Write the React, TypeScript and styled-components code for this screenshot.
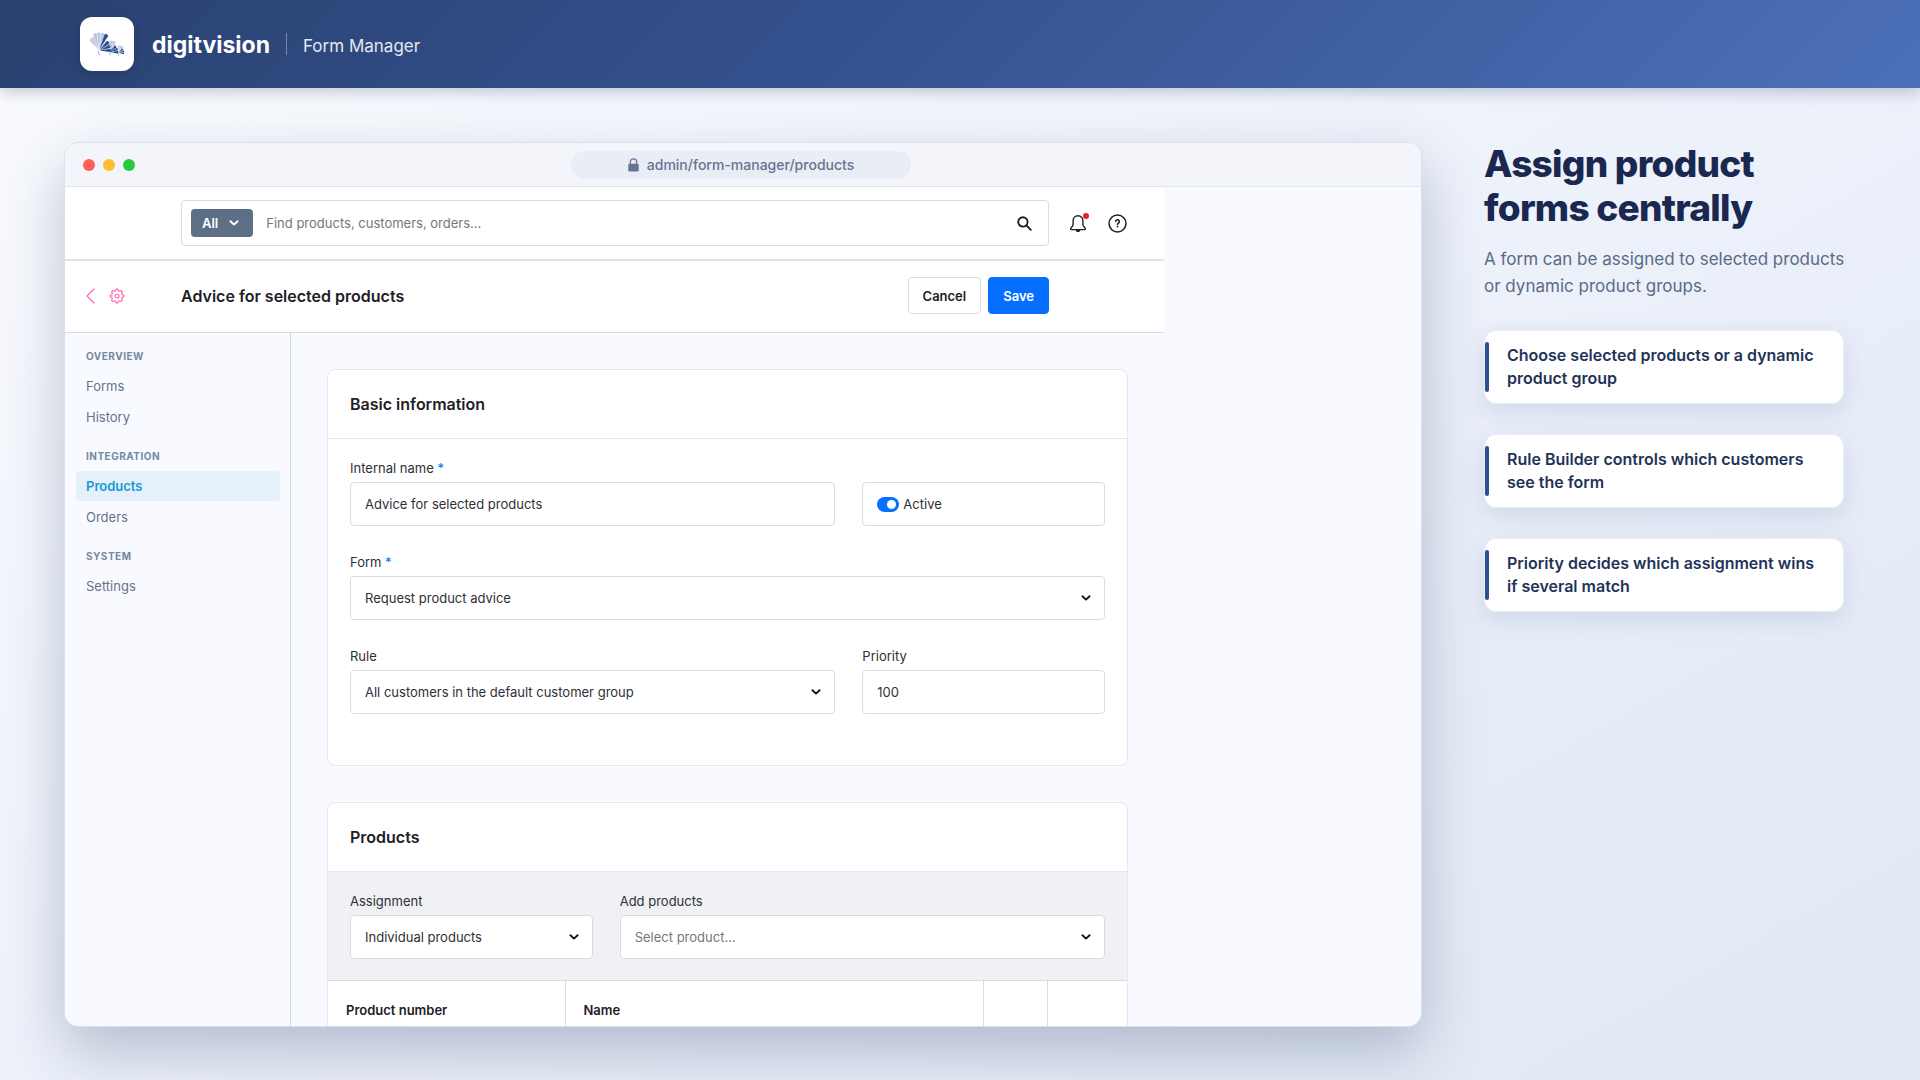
import React, { useId, useState } from 'react';
import styled, { createGlobalStyle, css } from 'styled-components';

const ink = '#1f2026';
const line = '#d9dbe0';
const brand = '#2f4f94';

const GlobalStyle = createGlobalStyle`
  *, *::before, *::after { box-sizing: border-box; }
  body { margin: 0; }
  body, button, input, select { font-family: Inter, 'Liberation Sans', sans-serif; }
  h1, h2, h3, p, ul { margin: 0; padding: 0; }
  ul { list-style: none; }
  button, select { cursor: pointer; }
  svg { display: block; flex: none; }
`;

const Page = styled.div`
  height: 100vh;
  display: flex;
  flex-direction: column;
  overflow: hidden;
  background: linear-gradient(150deg, #fafbfe 0%, #eff3fb 42%, #e7edf8 70%, #e1e8f4 100%);
`;

const Header = styled.header`
  flex: none;
  height: 88px;
  padding: 0 80px;
  display: flex;
  align-items: center;
  background: linear-gradient(135deg, #2a4170 0%, #34528f 45%, #4c70b8 100%);
  box-shadow: 0 4px 14px rgba(30, 50, 90, 0.25);
`;

const LogoTile = styled.a`
  width: 54px;
  height: 54px;
  display: grid;
  place-items: center;
  border-radius: 12px;
  background: #fff;
  box-shadow: 0 3px 8px rgba(15, 30, 60, 0.25);
`;

const BrandName = styled.span`
  margin-left: 18px;
  padding-top: 2px;
  font-size: 23px;
  font-weight: 700;
  color: #fff;
`;

const Divider = styled.span`
  width: 1px;
  height: 22px;
  margin: 0 16px;
  background: rgba(255, 255, 255, 0.35);
`;

const ProductName = styled.span`
  padding-top: 4px;
  font-size: 17px;
  line-height: 22px;
  color: #e3e8f3;
`;

const Main = styled.main`
  flex: 1;
  min-height: 0;
  display: grid;
  grid-template-columns: minmax(0, 1fr) 360px;
  gap: 62px;
  padding: 54px 76px 53px 64px;
`;

const BrowserWindow = styled.section`
  min-height: 0;
  display: flex;
  flex-direction: column;
  overflow: hidden;
  border: 1px solid #d8e1f0;
  border-radius: 14px;
  background: #f9faff;
  box-shadow: 0 24px 60px rgba(40, 62, 100, 0.29);
`;

const TitleBar = styled.div`
  flex: none;
  height: 44px;
  padding: 0 22px 0 18px;
  display: grid;
  grid-template-columns: 1fr 340px 1fr;
  align-items: center;
  background: #f3f5fa;
  border-bottom: 1px solid #dfe5f3;
`;

const Lights = styled.div`
  display: flex;
  gap: 8px;
`;

const Light = styled.span<{ $color: string }>`
  width: 12px;
  height: 12px;
  border-radius: 50%;
  background: ${p => p.$color};
`;

const AddressPill = styled.div`
  height: 28px;
  display: flex;
  align-items: center;
  justify-content: center;
  gap: 8px;
  border-radius: 14px;
  background: #e8edf6;
  color: #65758f;
  font-size: 14px;
  font-weight: 500;
`;

const AdminApp = styled.div`
  flex: 1;
  min-height: 0;
  max-width: 1099px;
  display: flex;
  flex-direction: column;
`;

const Bar = styled.div`
  flex: none;
  display: grid;
  grid-template-columns: 116px minmax(0, 1fr) 115px;
  align-items: center;
  background: #fff;
`;

const TopBar = styled(Bar)`
  height: 74px;
  border-bottom: 2px solid #e2e3e6;
`;

const TitleRow = styled(Bar)`
  height: 72px;
  padding-bottom: 2px;
  border-bottom: 1px solid ${line};
`;

const SearchBox = styled.form`
  grid-column: 2;
  height: 46px;
  padding: 0 16px 0 9px;
  display: flex;
  align-items: center;
  border: 1px solid ${line};
  border-radius: 4px;
`;

const ScopeButton = styled.button`
  height: 28px;
  padding: 0 14px 0 11px;
  display: flex;
  align-items: center;
  gap: 11px;
  border: 0;
  border-radius: 4px;
  background: #5c6f86;
  color: #fff;
  font-size: 13px;
  font-weight: 600;
`;

const SearchInput = styled.input`
  flex: 1;
  min-width: 0;
  height: 28px;
  margin: 0 13px;
  padding: 0;
  border: 0;
  outline: 0;
  font-size: 13px;
  color: ${ink};
  &::placeholder { color: #75777d; opacity: 1; }
`;

const IconButton = styled.button`
  padding: 0;
  border: 0;
  background: none;
  color: ${ink};
`;

const TopActions = styled.div`
  padding-left: 20px;
  display: flex;
  align-items: center;
  gap: 21px;
`;

const BellButton = styled(IconButton)`
  position: relative;
  &::after {
    content: '';
    position: absolute;
    top: -1px;
    right: -2px;
    width: 6px;
    height: 6px;
    border-radius: 50%;
    background: #e3262c;
  }
`;

const NavIcons = styled.div`
  padding-left: 21px;
  display: flex;
  align-items: center;
  gap: 14px;
  & button { color: #ff68b4; }
`;

const TitleArea = styled.div`
  display: flex;
  align-items: center;
  gap: 7px;
`;

const PageTitle = styled.h2`
  flex: 1;
  font-size: 16px;
  line-height: 24px;
  font-weight: 600;
  color: ${ink};
`;

const ActionButton = styled.button<{ $primary?: boolean }>`
  height: 37px;
  padding: 0 14px;
  border: 1px solid ${p => (p.$primary ? '#066fff' : line)};
  border-radius: 4px;
  background: ${p => (p.$primary ? '#066fff' : '#fff')};
  color: ${p => (p.$primary ? '#fff' : ink)};
  font-size: 13px;
  font-weight: 600;
`;

const Body = styled.div`
  flex: 1;
  min-height: 0;
  display: grid;
  grid-template-columns: 226px minmax(0, 1fr);
`;

const Sidebar = styled.nav`
  padding: 13px 10px 0 11px;
  display: flex;
  flex-direction: column;
  gap: 14px;
  border-right: 1px solid #d3d7de;
`;

const NavHeading = styled.h3`
  padding: 0 10px;
  margin-bottom: 5px;
  font-size: 10px;
  line-height: 20px;
  font-weight: 700;
  letter-spacing: 0.05em;
  text-transform: uppercase;
  color: #74889f;
`;

const NavList = styled.ul`
  display: grid;
  gap: 1px;
`;

const NavLink = styled.a<{ $active?: boolean }>`
  display: block;
  padding: 0 10px;
  font-size: 13px;
  line-height: 30px;
  border-radius: 4px;
  color: #64748b;
  text-decoration: none;
  ${p => p.$active && css`
    background: #e4f0fa;
    color: #189ad6;
    font-weight: 600;
  `}
`;

const Content = styled.div`
  min-height: 0;
  padding: 36px 36px 0;
  overflow: hidden;
  display: flex;
  flex-direction: column;
  gap: 36px;
`;

const Card = styled.section`
  flex: none;
  border: 1px solid #e6e8ed;
  border-radius: 8px;
  background: #fff;
  overflow: hidden;
`;

const CardTitle = styled.h3`
  padding: 0 22px;
  font-size: 16px;
  line-height: 68px;
  font-weight: 600;
  color: ${ink};
  border-bottom: 1px solid #e6e8ed;
`;

const FieldGrid = styled.div`
  padding: 19px 22px 51px;
  display: grid;
  grid-template-columns: minmax(0, 2fr) minmax(0, 1fr);
  column-gap: 27px;
  row-gap: 26px;
  align-items: end;
`;

const ShadedGrid = styled(FieldGrid)`
  grid-template-columns: minmax(0, 1fr) minmax(0, 2fr);
  padding: 19px 22px 21px;
  background: #f0f1f5;
  border-bottom: 1px solid ${line};
`;

const Field = styled.div<{ $wide?: boolean }>`
  grid-column: ${p => (p.$wide ? '1 / -1' : 'auto')};
`;

const Label = styled.label`
  display: block;
  margin-bottom: 4px;
  font-size: 13px;
  line-height: 20px;
  color: #2e3036;
`;

const Required = styled.span`
  color: #066fff;
`;

const controlBox = css`
  width: 100%;
  height: 44px;
  padding: 0 14px;
  border: 1px solid ${line};
  border-radius: 4px;
  background: #fff;
  font-size: 13px;
  color: #2e3036;
`;

const TextInput = styled.input`
  ${controlBox}
`;

const SelectWrap = styled.div`
  display: grid;
  align-items: center;
  & > * { grid-area: 1 / 1; }
  & > svg {
    justify-self: end;
    margin-right: 14px;
    pointer-events: none;
    color: #14151a;
  }
`;

const Select = styled.select<{ $muted?: boolean }>`
  ${controlBox}
  appearance: none;
  color: ${p => (p.$muted ? '#75777d' : '#2e3036')};
`;

const ToggleBox = styled.label`
  ${controlBox}
  display: flex;
  align-items: center;
  gap: 4px;
`;

const Toggle = styled.input`
  appearance: none;
  width: 22px;
  height: 15px;
  margin: 0;
  padding: 3px;
  display: flex;
  border-radius: 8px;
  background: #a9b4c4;
  &::before {
    content: '';
    width: 9px;
    height: 9px;
    border-radius: 50%;
    background: #fff;
  }
  &:checked {
    background: #066fff;
    justify-content: flex-end;
  }
`;

const Table = styled.table`
  width: 100%;
  table-layout: fixed;
  border-collapse: collapse;
`;

const HeadCell = styled.th<{ $width?: string }>`
  width: ${p => p.$width ?? 'auto'};
  height: 58px;
  padding: 0 18px;
  text-align: left;
  font-size: 13px;
  font-weight: 600;
  color: ${ink};
  & + & { border-left: 1px solid ${line}; }
`;

const Cell = styled.td`
  height: 52px;
  padding: 0 18px;
  border-top: 1px solid ${line};
`;

const Aside = styled.aside`
  display: flex;
  flex-direction: column;
`;

const Headline = styled.h1`
  font-size: 37px;
  line-height: 44px;
  font-weight: 800;
  letter-spacing: -0.02em;
  color: #1a2850;
`;

const Lead = styled.p`
  margin: 16px 0 30px;
  font-size: 17px;
  line-height: 27px;
  white-space: nowrap;
  color: #5a6b86;
`;

const Points = styled.ul`
  display: grid;
  gap: 30px;
`;

const Point = styled.li`
  display: flex;
  align-items: center;
  min-height: 74px;
  padding-right: 18px;
  border: 1px solid #e9eef8;
  border-radius: 12px;
  background: #fff;
  box-shadow: 0 8px 24px rgba(40, 65, 115, 0.13);
  font-size: 16px;
  line-height: 23px;
  font-weight: 600;
  color: #1f3358;
  &::before {
    content: '';
    flex: none;
    width: 4px;
    height: 50px;
    margin-right: 18px;
    border-radius: 2px;
    background: ${brand};
  }
`;

const Chevron = () => (
  <svg width="10" height="10" viewBox="0 0 10 10" fill="none" stroke="currentColor" strokeWidth="1.9" strokeLinecap="round" strokeLinejoin="round" aria-hidden="true">
    <path d="M1.4 3.2 5 6.6 8.6 3.2" />
  </svg>
);

const LockIcon = () => (
  <svg width="11" height="14" viewBox="0 0 11 14" aria-hidden="true">
    <path d="M2.3 6V4a3.2 3.2 0 0 1 6.4 0v2" fill="none" stroke="currentColor" strokeWidth="1.3" />
    <rect x="0.3" y="5.8" width="10.4" height="7.8" rx="1.3" fill="currentColor" />
  </svg>
);

const SearchIcon = () => (
  <svg width="15" height="15" viewBox="0 0 15 15" fill="none" stroke="currentColor" strokeWidth="1.9" strokeLinecap="round" aria-hidden="true">
    <circle cx="5.9" cy="5.9" r="4.7" />
    <path d="m9.5 9.5 4.3 4.3" />
  </svg>
);

const BellIcon = () => (
  <svg width="18" height="19" viewBox="0 0 18 19" fill="none" stroke="currentColor" strokeWidth="1.4" strokeLinejoin="round" aria-hidden="true">
    <path d="M9 1.7c-3 0-4.9 2.2-4.9 5v3.6c0 1.5-.8 2.2-2 3.5-.9.9-.6 1.8.5 1.8h12.8c1.1 0 1.4-.9.5-1.8-1.2-1.3-2-2-2-3.5V6.7c0-2.8-1.900-5-4.900-5Z" />
    <path d="M7.3 15.8a1.7 1.7 0 0 0 3.4 0" fill="currentColor" />
  </svg>
);

const HelpIcon = () => (
  <svg width="19" height="19" viewBox="0 0 19 19" fill="none" stroke="currentColor" strokeWidth="1.5" strokeLinecap="round" aria-hidden="true">
    <circle cx="9.5" cy="9.5" r="8.5" />
    <path d="M7.7 7.6a1.85 1.85 0 1 1 2.7 1.65c-.6.3-.9.6-.9 1.15" />
    <circle cx="9.5" cy="12.6" r="0.9" fill="currentColor" stroke="none" />
  </svg>
);

const BackIcon = () => (
  <svg width="9" height="16" viewBox="0 0 9 16" fill="none" stroke="currentColor" strokeWidth="1.3" strokeLinecap="round" strokeLinejoin="round" aria-hidden="true">
    <path d="M8 1 1 8l7 7" />
  </svg>
);

const gearPath = (() => {
  const pts: string[] = [];
  const steps = 96;
  for (let i = 0; i < steps; i++) {
    const a = (i / steps) * Math.PI * 2;
    const wave = Math.max(-1, Math.min(1, Math.cos(a * 8) * 1.7));
    const r = 6.1 + wave * 0.8;
    pts.push(`${(8 + Math.sin(a) * r).toFixed(2)} ${(8 - Math.cos(a) * r).toFixed(2)}`);
  }
  return `M${pts.join('L')}Z`;
})();

const GearIcon = () => (
  <svg width="16" height="16" viewBox="0 0 16 16" fill="none" stroke="currentColor" strokeWidth="1.2" strokeLinejoin="round" aria-hidden="true">
    <path d={gearPath} />
    <circle cx="8" cy="8" r="2" />
  </svg>
);

type FanProps = { x: number; y: number; r: number; from: number; to: number; blades: number; color: string };

const Fan = ({ x, y, r, from, to, blades, color }: FanProps) => {
  const step = (to - from) / blades;
  const at = (deg: number, radius: number) => {
    const a = (deg * Math.PI) / 180;
    return `${(x + Math.sin(a) * radius).toFixed(2)} ${(y - Math.cos(a) * radius).toFixed(2)}`;
  };
  return (
    <g fill={color}>
      {Array.from({ length: blades }, (_, i) => {
        const a = from + i * step;
        return (
          <path
            key={i}
            d={`M${at(a + step / 2, r * 0.06)}L${at(a + step * 0.06, r * 0.96)}Q${at(a + step / 2, r * 1.06)} ${at(a + step * 0.9, r * 0.96)}Z`}
          />
        );
      })}
    </g>
  );
};

const pale = '#bcc3df';

const Logo = () => (
  <svg width="34" height="25" viewBox="0 0 34 25" aria-hidden="true">
    <Fan x={9.5} y={18.5} r={15} from={-46} to={-22} blades={2} color={pale} />
    <Fan x={9.5} y={18.5} r={18} from={-22} to={18} blades={3} color={pale} />
    <Fan x={9} y={18.5} r={18} from={18} to={34} blades={1} color={brand} />
    <Fan x={9} y={18.5} r={13} from={38} to={100} blades={3} color={brand} />
    <Fan x={21} y={20} r={11.5} from={-14} to={26} blades={3} color={pale} />
    <Fan x={20} y={20} r={8.5} from={34} to={104} blades={3} color={brand} />
    <Fan x={29.5} y={21} r={7.5} from={-14} to={34} blades={3} color={pale} />
    <Fan x={28.5} y={21} r={6} from={36} to={106} blades={3} color={brand} />
    <path d="M8 18.500l1.500 4.500M19.500 19.500l.8 4M28 21l.6 3" stroke={pale} strokeWidth="1.2" />
  </svg>
);

type SelectFieldProps = { label: string; value: string; wide?: boolean; required?: boolean; muted?: boolean };

const SelectField = ({ label, value, wide, required, muted }: SelectFieldProps) => {
  const id = useId();
  return (
    <Field $wide={wide}>
      <Label htmlFor={id}>{label}{required && <Required> *</Required>}</Label>
      <SelectWrap>
        <Select id={id} $muted={muted}><option>{value}</option></Select>
        <Chevron />
      </SelectWrap>
    </Field>
  );
};

type TextFieldProps = { label: string; initial: string; required?: boolean };

const TextField = ({ label, initial, required }: TextFieldProps) => {
  const id = useId();
  return (
    <Field>
      <Label htmlFor={id}>{label}{required && <Required> *</Required>}</Label>
      <TextInput id={id} defaultValue={initial} />
    </Field>
  );
};

const navigation = [
  { title: 'Overview', items: ['Forms', 'History'] },
  { title: 'Integration', items: ['Products', 'Orders'] },
  { title: 'System', items: ['Settings'] },
];

const points = [
  'Choose selected products or a dynamic product group',
  'Rule Builder controls which customers see the form',
  'Priority decides which assignment wins if several match',
];

export default function App() {
  const [active, setActive] = useState(true);
  return (
    <>
      <GlobalStyle />
      <Page>
        <Header>
          <LogoTile href="#" aria-label="digitvision"><Logo /></LogoTile>
          <BrandName>digitvision</BrandName>
          <Divider />
          <ProductName>Form Manager</ProductName>
        </Header>
        <Main>
          <BrowserWindow>
            <TitleBar>
              <Lights>
                <Light $color="#ff5f57" />
                <Light $color="#febc2e" />
                <Light $color="#28c840" />
              </Lights>
              <AddressPill><LockIcon />admin/form-manager/products</AddressPill>
            </TitleBar>
            <AdminApp>
              <TopBar>
                <SearchBox onSubmit={e => e.preventDefault()}>
                  <ScopeButton type="button">All<Chevron /></ScopeButton>
                  <SearchInput aria-label="Search" placeholder="Find products, customers, orders..." />
                  <IconButton type="submit" aria-label="Search"><SearchIcon /></IconButton>
                </SearchBox>
                <TopActions>
                  <BellButton type="button" aria-label="Notifications"><BellIcon /></BellButton>
                  <IconButton type="button" aria-label="Help"><HelpIcon /></IconButton>
                </TopActions>
              </TopBar>
              <TitleRow>
                <NavIcons>
                  <IconButton type="button" aria-label="Back"><BackIcon /></IconButton>
                  <IconButton type="button" aria-label="Settings"><GearIcon /></IconButton>
                </NavIcons>
                <TitleArea>
                  <PageTitle>Advice for selected products</PageTitle>
                  <ActionButton type="button">Cancel</ActionButton>
                  <ActionButton type="button" $primary>Save</ActionButton>
                </TitleArea>
              </TitleRow>
              <Body>
                <Sidebar>
                  {navigation.map(group => (
                    <div key={group.title}>
                      <NavHeading>{group.title}</NavHeading>
                      <NavList>
                        {group.items.map(item => (
                          <li key={item}>
                            <NavLink href="#" $active={item === 'Products'}>{item}</NavLink>
                          </li>
                        ))}
                      </NavList>
                    </div>
                  ))}
                </Sidebar>
                <Content>
                  <Card>
                    <CardTitle>Basic information</CardTitle>
                    <FieldGrid>
                      <TextField label="Internal name" initial="Advice for selected products" required />
                      <ToggleBox>
                        <Toggle type="checkbox" role="switch" checked={active} onChange={e => setActive(e.target.checked)} />
                        Active
                      </ToggleBox>
                      <SelectField label="Form" value="Request product advice" wide required />
                      <SelectField label="Rule" value="All customers in the default customer group" />
                      <TextField label="Priority" initial="100" />
                    </FieldGrid>
                  </Card>
                  <Card>
                    <CardTitle>Products</CardTitle>
                    <ShadedGrid>
                      <SelectField label="Assignment" value="Individual products" />
                      <SelectField label="Add products" value="Select product..." muted />
                    </ShadedGrid>
                    <Table>
                      <thead>
                        <tr>
                          <HeadCell $width="237px">Product number</HeadCell>
                          <HeadCell>Name</HeadCell>
                          <HeadCell $width="64px" />
                          <HeadCell $width="80px" />
                        </tr>
                      </thead>
                      <tbody>
                        <tr><Cell /><Cell /><Cell /><Cell /></tr>
                      </tbody>
                    </Table>
                  </Card>
                </Content>
              </Body>
            </AdminApp>
          </BrowserWindow>
          <Aside>
            <Headline>Assign product forms centrally</Headline>
            <Lead>
              A form can be assigned to selected products
              <br />
              or dynamic product groups.
            </Lead>
            <Points>
              {points.map(text => <Point key={text}>{text}</Point>)}
            </Points>
          </Aside>
        </Main>
      </Page>
    </>
  );
}
